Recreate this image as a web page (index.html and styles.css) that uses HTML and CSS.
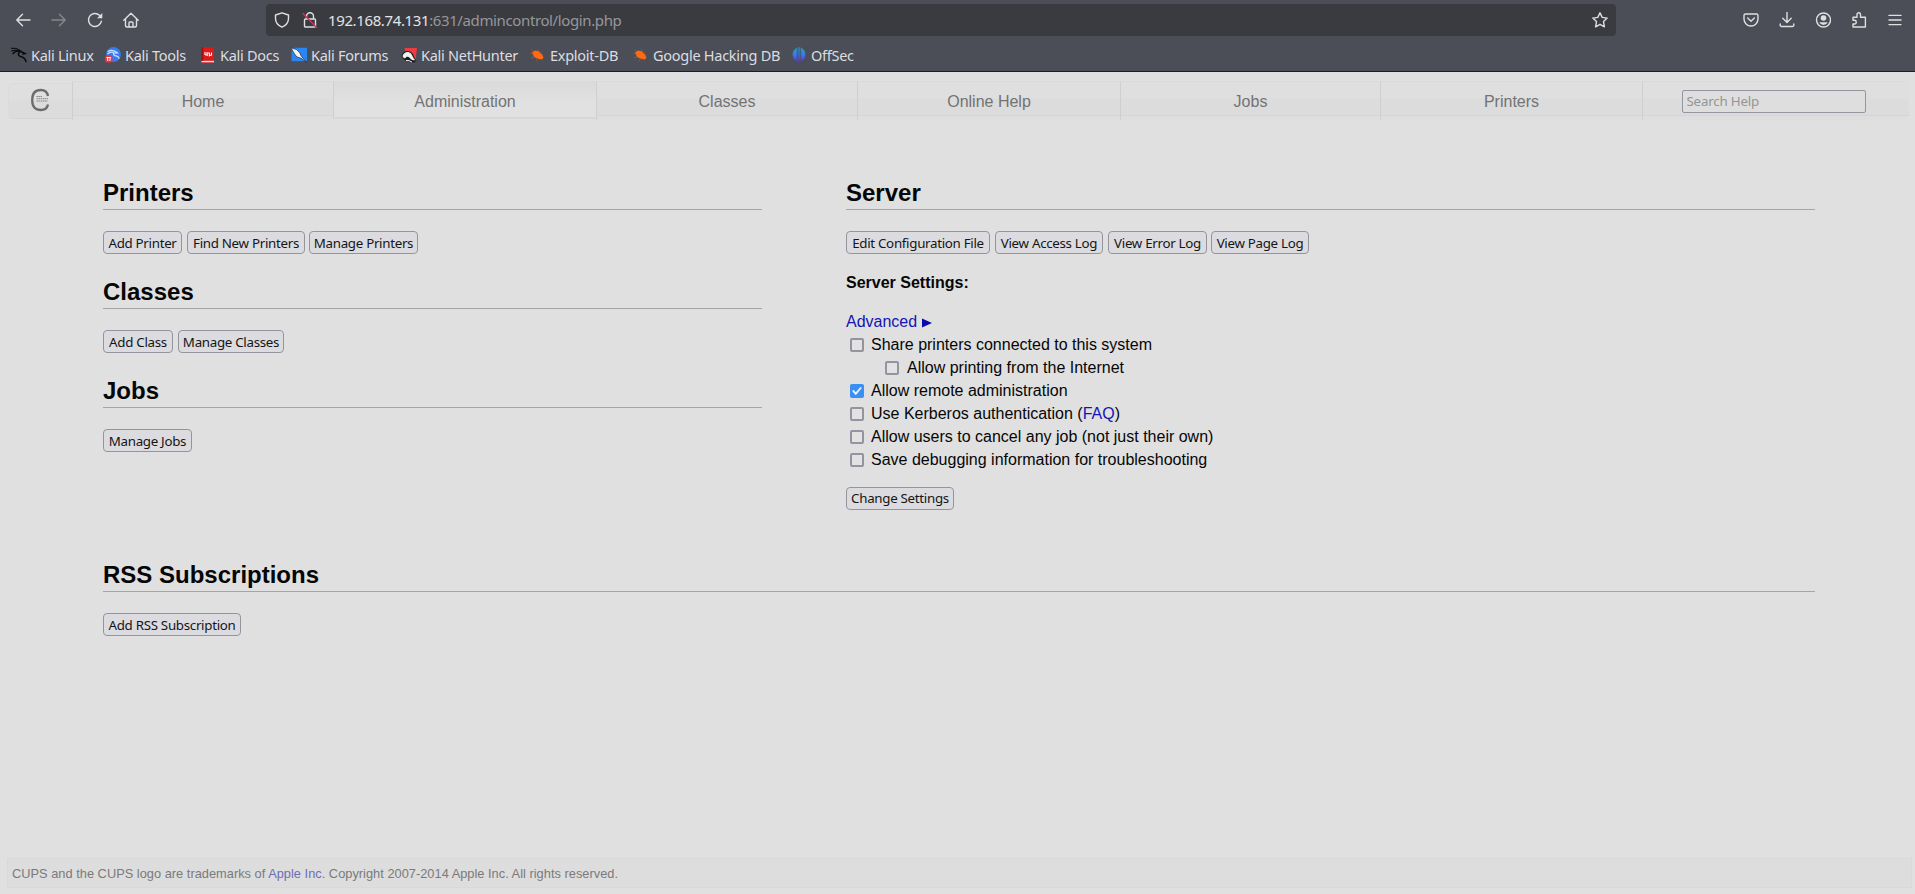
FILE: index.html
```html
<!DOCTYPE html>
<html lang="en">
<head>
<meta charset="utf-8">
<title>Administration - CUPS</title>
<link rel="stylesheet" href="styles.css">
</head>
<body>
<header class="browser">
  <div class="toolbar">
    <div class="nav-buttons">
      <svg class="ic" viewBox="0 0 16 16"><path d="M15 8H1.800M7.500 2.300 1.800 8l5.700 5.700"/></svg>
      <svg class="ic dim" viewBox="0 0 16 16"><path d="M1 8h13.200M8.500 2.300 14.200 8l-5.700 5.700"/></svg>
      <svg class="ic" viewBox="0 0 16 16"><path d="M14.400 9.200A6.500 6.500 0 1 1 12.500 3.300L14 4.800"/><path class="solid" d="M15.300 1v5.200h-5.200z"/></svg>
      <svg class="ic" viewBox="0 0 16 16"><path d="M.8 8.200 8 1.200l7.200 7M2.500 7v6.500a1.500 1.500 0 0 0 1.500 1.500h8a1.500 1.500 0 0 0 1.500-1.500V7M6 14.800v-4A.8.800 0 0 1 6.800 10h2.400a.8.800 0 0 1 .8.800v4"/></svg>
    </div>
    <div class="urlbar">
      <svg class="ic shield" viewBox="0 0 16 16"><path d="M8 .9 14.500 3v3.500c0 4-2.500 7-6.500 8.700C4 13.500 1.500 10.500 1.500 6.500V3z"/></svg>
      <svg class="ic lock" viewBox="0 0 16 16"><path d="M4.500 7V4.300a3.500 3.500 0 0 1 7 0V7M3.500 7h9a1 1 0 0 1 1 1v6a1 1 0 0 1-1 1h-9a1 1 0 0 1-1-1V8a1 1 0 0 1 1-1z"/><path class="slash" d="m1 1.500 13.500 14"/></svg>
      <span class="url"><b>192.168.74.131</b>:631/admincontrol/login.php</span>
      <svg class="ic star" viewBox="0 0 16 16"><path d="m8 .8 2.200 4.600 5 .7-3.700 3.500.9 5.200L8 12.300l-4.400 2.500.9-5.200L.8 6.100l5-.7z"/></svg>
    </div>
    <div class="tools">
      <svg class="ic" viewBox="0 0 16 16"><path d="M2.500 2h11a1.500 1.500 0 0 1 1.500 1.500V7A7 7 0 0 1 1 7V3.500A1.500 1.500 0 0 1 2.500 2zM4.700 6 8 9.200 11.300 6"/></svg>
      <svg class="ic" viewBox="0 0 16 16"><path d="M8 .5v9.800M3.800 6.300 8 10.500l4.200-4.200M1.200 12v1.200A1.300 1.300 0 0 0 2.500 14.500h11a1.300 1.300 0 0 0 1.300-1.300V12"/></svg>
      <svg class="ic" viewBox="0 0 16 16"><circle cx="8.500" cy="8" r="7"/><circle class="solid" cx="8.500" cy="6" r="2.800"/><path class="solid" d="M4.300 10.200h8.400Q11.300 13 8.500 13T4.300 10.200z"/></svg>
      <svg class="ic" viewBox="0 0 16 16"><path d="M2 5.200h4V2.500a1.700 1.700 0 0 1 3.500 0v2.700h4.900v9.800H2v-3h1.800a1.900 1.900 0 0 0 0-3.700H2z"/></svg>
      <svg class="ic" viewBox="0 0 16 16"><path d="M2 3.400h12M2 8h12M2 12.600h12"/></svg>
    </div>
  </div>
  <nav class="bookmarks">
    <a class="bm bm-linux"><svg viewBox="0 0 16 16"><g fill="none" stroke="#08090b" stroke-linecap="round"><path d="M.3 1.200Q5 .5 9 3.200M.6 3.800Q5 2 9.500 4.200" stroke-width="1"/><path d="M2 6.500Q5 3 9.500 4.300l4.500 2.200-2 .4M9 4.500Q5.500 8 9.500 9.600q4.500 1 5.500 5" stroke-width="1.500"/></g></svg><span>Kali Linux</span></a>
    <a class="bm bm-tools"><svg viewBox="0 0 16 16"><circle cx="8.500" cy="7.500" r="7.400" fill="#367bf0"/><path d="M2.500 4.500Q8 1.500 12.500 6l-4 .2q-.5 2.300 2.500 2.600 3 .6 3 3M2.500 7Q5 4.500 8.500 5.500" fill="none" stroke="#c8dfff" stroke-width="1.200"/><rect x="0" y="8.500" width="7.500" height="7" rx="2.500" fill="#e8333e"/><path d="M1.500 10.500h4.700M2.700 10.500v3.500M5 10.500v3.500" stroke="#fff"/></svg><span>Kali Tools</span></a>
    <a class="bm bm-docs"><svg viewBox="0 0 16 16"><path d="M1.500.2H14v15.500H1.500z" fill="#df1818"/><path d="M1.500 13.800H14v1.500H1.500z" fill="#e7dcdc"/><path d="M1.500.2h1.700v13.600H1.500z" fill="#a20d12"/><path d="M5 5v2.500L7.300 8.200 7 5.800l2.500.4L9.300 8.700 11.500 8V5.500" fill="none" stroke="#fff" stroke-width="1.100"/></svg><span>Kali Docs</span></a>
    <a class="bm bm-forums"><svg viewBox="0 0 16 16"><rect x=".5" y=".8" width="15.500" height="13.400" fill="#2b86f5"/><path d="M0 .8 5.500 2.500l3.200 3.200 1.800 3.800 5 5.700-5.500-4-4-1.200L3.500 7z" fill="#f1f3f5" stroke="#22272d" stroke-width=".7"/></svg><span>Kali Forums</span></a>
    <a class="bm bm-nethunter"><svg viewBox="0 0 16 16"><path d="M3.500 1H16l-1.500 12.500H6z" fill="#ef3a42"/><path d="M.5 9C1.500 4 7 2.500 10.500 5.500c3 2.600 1.500 4.500 5 7.500l-2 2.500-5-.5C6 14 2 13 .5 9z" fill="#17191d"/><path d="M1.500 9C3 4.500 7.500 4 10 6.500c2 2.500 1.500 4 4.500 6.800-3 .2-4.500-.8-5.700-2.300C7.500 9.500 5.500 9 4 11.500 2.500 11 1.800 10 1.500 9z" fill="#f1f1f1"/><path d="M5 13.500Q8 13 11 15" fill="none" stroke="#f1f1f1"/></svg><span>Kali NetHunter</span></a>
    <a class="bm bm-exploit"><svg viewBox="0 0 16 16"><path d="m2 5.500 3-2 4 1L12.500 8l1 3-2 1.500-3.500-.8L4 10z" fill="#ff6a13"/><path d="M1.500 2.500 4 5M0 6l4 1.200M1 11l4-1.500M7.500 2l2 3M11.500 5 10 7M6.500 14l1-3M13 8l-1.500 1" fill="none" stroke="#b45a30" stroke-width=".6"/></svg><span>Exploit-DB</span></a>
    <a class="bm bm-google"><svg viewBox="0 0 16 16"><path d="m2 5.500 3-2 4 1L12.500 8l1 3-2 1.500-3.500-.8L4 10z" fill="#ff6a13"/><path d="M1.500 2.500 4 5M0 6l4 1.200M1 11l4-1.500M7.500 2l2 3M11.500 5 10 7M6.500 14l1-3M13 8l-1.500 1" fill="none" stroke="#b45a30" stroke-width=".6"/></svg><span>Google Hacking DB</span></a>
    <a class="bm bm-offsec"><svg viewBox="0 0 16 16"><defs><linearGradient id="os" gradientUnits="userSpaceOnUse" x1="0" y1="0" x2="0" y2="16"><stop stop-color="#1fa5c9"/><stop offset=".5" stop-color="#3d78e8"/><stop offset="1" stop-color="#6527c9"/></linearGradient></defs><path d="M5.800.8v13.400A7.500 7.500 0 0 1 5.800.8zM10.200.8v13.400a7.500 7.500 0 0 0 0-13.400zM6.700.2h.9v15.300h-.9zM8.400.2h.9v15.300h-.9z" fill="url(#os)"/></svg><span>OffSec</span></a>
  </nav>
</header>
<main class="page">
  <nav class="menu">
    <a class="logo"><svg viewBox="0 0 20 24"><path d="M18 8C17.300 4 14.500 2 10.800 2 5 2 2.200 6 2.200 12S5 22 10.800 22c4 0 6.500-2 7.200-5.500" fill="none" stroke="#6c6c6c" stroke-width="2.300"/><path d="M6.500 8.500h6M6.500 10.700h12M6.500 13h11" stroke="#858585" stroke-width="1" stroke-dasharray="1.500 .5"/></svg></a>
    <a class="tab tab-home">Home</a>
    <a class="tab tab-admin active">Administration</a>
    <a class="tab tab-classes">Classes</a>
    <a class="tab tab-help">Online Help</a>
    <a class="tab tab-jobs">Jobs</a>
    <a class="tab tab-printers">Printers</a>
    <div class="search"><input type="text" placeholder="Search Help"></div>
  </nav>
  <div class="content">
    <div class="columns">
      <div class="left">
        <section><h2>Printers</h2><div class="buttons"><button class="w79">Add Printer</button><button class="w118">Find New Printers</button><button class="w109">Manage Printers</button></div></section>
        <section><h2>Classes</h2><div class="buttons"><button class="w70">Add Class</button><button class="w106">Manage Classes</button></div></section>
        <section><h2>Jobs</h2><div class="buttons"><button class="w89">Manage Jobs</button></div></section>
      </div>
      <div class="right">
        <h2>Server</h2>
        <div class="buttons"><button class="w144">Edit Configuration File</button><button class="w108">View Access Log</button><button class="w99">View Error Log</button><button class="w98">View Page Log</button></div>
        <p class="settings-title">Server Settings:</p>
        <div class="settings">
          <a class="link advanced"><span>Advanced</span><svg viewBox="0 0 10 10"><path d="M0 .5 10 5 0 9.500z" fill="#0a0aaa"/></svg></a>
          <label><i class="box"></i><span>Share printers connected to this system</span></label>
          <label class="indent"><i class="box"></i><span>Allow printing from the Internet</span></label>
          <label><i class="box on"><svg viewBox="0 0 14 14"><path d="m3.300 7 2.500 2.700 4.900-5.700" fill="none" stroke="#e4f0ff" stroke-width="1.900" stroke-linecap="round"/></svg></i><span>Allow remote administration</span></label>
          <label><i class="box"></i><span>Use Kerberos authentication (<a class="link">FAQ</a>)</span></label>
          <label><i class="box"></i><span>Allow users to cancel any job (not just their own)</span></label>
          <label><i class="box"></i><span>Save debugging information for troubleshooting</span></label>
        </div>
        <button class="w108">Change Settings</button>
      </div>
    </div>
    <section class="rss"><h2>RSS Subscriptions</h2><div class="buttons"><button class="w138">Add RSS Subscription</button></div></section>
  </div>
  <footer class="footer">CUPS and the CUPS logo are trademarks of <a>Apple Inc.</a> Copyright 2007-2014 Apple Inc. All rights reserved.</footer>
</main>
</body>
</html>
```
FILE: styles.css
```css
* { box-sizing: border-box; }
body { margin: 0; height: 894px; overflow: hidden; display: flex; flex-direction: column; background: #e0e0e0; color: #060606; font: 16px/23px "Liberation Sans", Arial, sans-serif; }
svg { display: block; flex: none; }

/* Browser chrome */
.browser { height: 72px; flex: none; background: #4b4e56; border-bottom: 1px solid #1e1e22; font-family: "Noto Sans", sans-serif; color: #dcdde0; }
.toolbar { display: flex; align-items: center; height: 40px; }
.ic { width: 16px; height: 16px; fill: none; stroke: #dedfe1; stroke-width: 1.4; stroke-linecap: round; stroke-linejoin: round; }
.solid { fill: #dedfe1; stroke: none; }
.dim { opacity: .4; }
.slash { stroke: #d62e58; }
.nav-buttons { display: flex; gap: 20px; padding-left: 15px; width: 266px; }
.urlbar { width: 1350px; height: 32px; display: flex; align-items: center; padding: 0 8px; border-radius: 4px; background: #3a3b40; }
.lock { margin-left: 12px; }
.url { margin-left: 10px; flex: 1; font-size: 15px; letter-spacing: -.38px; color: #96979b; white-space: nowrap; }
.url b { font-weight: 400; color: #e4e4e6; }
.tools { display: flex; gap: 20px; margin-left: 127px; }
.bookmarks { display: flex; align-items: center; height: 30px; padding-left: 11px; font-size: 14.5px; letter-spacing: -.27px; line-height: 20px; }
.bm { display: flex; gap: 4px; align-items: center; white-space: nowrap; flex: none; }
.bm svg { width: 16px; height: 16px; }
.bm-linux { width: 94px; }
.bm-tools { width: 95px; }
.bm-docs { width: 91px; }
.bm-forums { width: 110px; }
.bm-nethunter { width: 129px; }
.bm-exploit { width: 103px; }
.bm-google { width: 158px; }

/* CUPS page */
.page { flex: 1; display: flex; flex-direction: column; }
.menu { display: flex; height: 39px; margin: 9px 5px 0 8px; color: #737373; }
.menu > * { display: flex; align-items: center; justify-content: center; border-top: 1px solid #dadada; background: linear-gradient(#dfdfdf 0 15px, #dcdcdc 18px 33px, #d5d5d5 33px 34px, #dedede 34px); flex: none; }
.tab { border-left: 1px solid #cfcfcf; }
.menu .logo { width: 64px; border: 1px solid #dbdbdb; border-bottom-color: #d5d5d5; border-right: 0; border-radius: 5px 0 0 5px; margin: 2px 0 1px; padding: 0 2px 2px 0; background: linear-gradient(#dfdfdf 0 15px, #dcdcdc 18px); }
.logo svg { width: 20px; height: 24px; }
.tab-home { width: 261px; }
.tab-admin { width: 263px; }
.tab-classes { width: 261px; }
.tab-help { width: 263px; }
.tab-jobs { width: 260px; }
.tab-printers { width: 262px; }
.menu .active { background: linear-gradient(#dadada, #e1e1e1 60%); border-bottom: 2px solid #d7d7d7; margin-bottom: 1px; padding-top: 3px; }
.menu .search { width: 267px; border-left: 1px solid #cfcfcf; border-radius: 0 5px 5px 0; padding: 0 5px 0 0; }
.search input { width: 184px; height: 23px; border: 1px solid #95959f; border-radius: 2px; background: #dedede; padding: 1px 4px; font: 13.333px "Noto Sans", sans-serif; letter-spacing: -.2px; }
.search input::placeholder { color: #959595; opacity: 1; }
.content { padding: 57px 100px 0 103px; }
.columns { display: grid; grid-template-columns: 659px 969px; column-gap: 84px; height: 382px; }
h2 { margin: 0 0 21px; height: 33px; padding-top: 1px; border-bottom: 1px solid #a5a5a5; font-size: 24px; line-height: 29px; }
.buttons { display: flex; gap: 5px; }
.w118 + .w109 { margin-left: -1px; }
.w99 + .w98 { margin-left: -1px; }
.left section { height: 99px; }
button { height: 23px; padding: 0; border: 1px solid #94949e; border-radius: 4px; background: #dcdce0; color: #151515; font: 13.333px/20px "Noto Sans", sans-serif; letter-spacing: -.3px; white-space: nowrap; }
.w79 { width: 79px; } .w118 { width: 118px; } .w109 { width: 109px; } .w70 { width: 70px; } .w106 { width: 106px; } .w89 { width: 89px; }
.w144 { width: 144px; } .w108 { width: 108px; } .w99 { width: 99px; } .w98 { width: 98px; } .w138 { width: 138px; }
.settings-title { margin: 17px 0 16px; font-weight: 700; }
.settings { display: flex; flex-direction: column; margin-bottom: 15px; }
.link { color: #1414b4; }
.advanced { display: flex; align-items: center; gap: 5px; height: 23px; }
.advanced svg { width: 10px; height: 10px; margin-top: 3px; }
label { display: flex; align-items: center; height: 23px; padding-left: 4px; gap: 7px; white-space: nowrap; }
.indent { padding-left: 39px; gap: 8px; }
.box { width: 14px; height: 14px; border: 2px solid #9494a0; border-radius: 2px; background: #e2e2e2; }
.on { border: 0; background: #3b8ff3; }
.footer { margin: auto 3px 6px 7px; height: 30px; padding: 4px; border: 1px solid #d9d9d9; background: #dddddd; font-size: 12.8px; line-height: 22px; letter-spacing: .02px; color: #7a7a7a; white-space: nowrap; }
.footer a { color: #6d6db8; }
```
